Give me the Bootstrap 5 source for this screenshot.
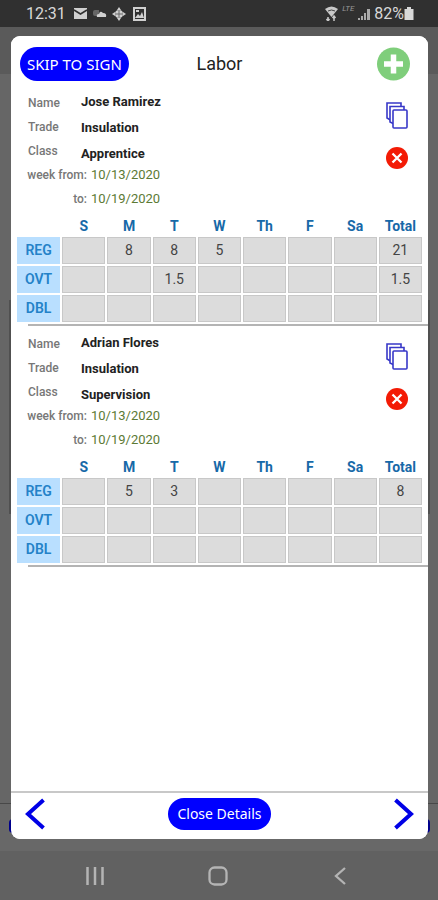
<!DOCTYPE html>
<html lang="en">
<head>
<meta charset="utf-8">
<meta name="viewport" content="width=device-width, initial-scale=1">
<title>Labor</title>
<link href="https://cdn.jsdelivr.net/npm/bootstrap@5.3.0/dist/css/bootstrap.min.css" rel="stylesheet">
<style>
body{font-family:Roboto,"Liberation Sans",sans-serif;background:#616161;color:#222}
svg{display:block}
.status-bar{height:27px;background:#303030;color:#d8d8d8;font-size:16px;line-height:27px;padding:0 24px 0 26px}
.net-label{font-size:8px;line-height:10px;color:#999}
.backdrop-area{padding:9px 10px 12px 11px;background:linear-gradient(#5a5a5a 47px,transparent 47px),linear-gradient(to top,#686868 47px,#484848 47px,#484848 48px,#666 48px)}
.labor-dialog{background:#fff;border-radius:9px;z-index:0}
.behind{z-index:-1;left:-2px;right:-2px}
.behind-pill{height:14px;bottom:6px;background:#00008c;border-radius:4px}
.behind-panel{top:264px;height:214px;background:#505050}
.dialog-face{background:#fff;border-radius:9px}
.dialog-head{display:grid;grid-template-columns:1fr auto 1fr;padding:11px 9px 4px}
.dialog-title{font-size:18px;line-height:34px;color:#222}
.pill{background:#00f;color:#fff;border:0;border-radius:17px;font-family:"Noto Sans",sans-serif}
.pill-skip{font-size:15px;line-height:34px;padding:0 7px}
.pill-close{font-size:14px;line-height:32px;padding:0 9px}
.icon-btn{background:none;border:0;padding:0}
.add-btn{margin:0 9px 0 auto}
.entry{padding-top:6px}
.entry::after{content:"";display:block;height:2px;margin-left:17px;background:#b4b4b4}
.entry-info{padding:0 20px 0 17px}
.info-labels{width:53px;font-size:12px;font-weight:500;line-height:24px;color:#777}
.info-values{padding-top:2px;gap:8px;font-size:13px;font-weight:700;line-height:18px}
.entry-actions{height:72px;padding-top:11px;gap:18px}
.date-row{padding-left:16px;gap:4px;line-height:24px}
.date-label{width:60px;font-size:12px;font-weight:500;color:#777;white-space:nowrap}
.date-value{font-size:13px;color:#5c7a35}
.hours-wrap{padding:0 4px}
.hours{width:100%;table-layout:fixed;border-collapse:separate;border-spacing:2px;text-align:center}
.hours th,.hours td{padding:0;line-height:27px;height:27px}
.hours thead th,.hours thead td{color:#1769a8;font-size:14px;font-weight:700;line-height:18px;height:22px;padding-top:4px}
.hours tbody th{background:#b9dfff;color:#2482c8;font-size:14px;font-weight:600}
.hours tbody td{background:#dcdcdc;box-shadow:inset 0 0 0 1px #c8c8c8;font-size:14px;color:#444}
.dialog-foot{border-top:2px solid #c8c8c8;padding:5px 14px 9px}
.system-nav{height:49px;padding:0 89px 0 86px}
</style>
<script src="https://cdn.jsdelivr.net/npm/bootstrap@5.3.0/dist/js/bootstrap.bundle.min.js"></script>
</head>
<body class="d-flex flex-column min-vh-100">
<svg class="d-none" aria-hidden="true">
  <symbol id="copy" viewBox="0 0 22 27"><g fill="#fff" stroke="#3838c8" stroke-width="1.6"><path d="M1 1h14v18h-9l-5-3z"/><path d="M4 4.500h14v17.500h-10l-4-2z"/><rect x="7" y="8" width="14" height="18" rx="1"/></g></symbol>
  <symbol id="remove" viewBox="0 0 22 22"><circle cx="11" cy="11" r="11" fill="#f31b05"/><path d="M6.500 6.500l9 9m0-9l-9 9" stroke="#fff" stroke-width="2.300"/></symbol>
</svg>

<header class="status-bar d-flex align-items-center justify-content-between">
  <div class="d-flex align-items-center">
    <span class="me-2">12:31</span>
    <svg width="76" height="14" viewBox="0 0 76 14" aria-hidden="true">
      <g fill="#d0d0d0"><rect x="0" y="1" width="13" height="11"/><path d="M0 3l6.500 4L13 3" fill="none" stroke="#303030" stroke-width="1.500"/>
      <path d="M19 5q0-2 2-2h4v6h-4q-2 0-2-2z" fill="#666"/><path d="M23 10q-1-3 2-3 1-4 4-1 4 0 3 4z"/>
      <circle cx="45" cy="7" r="4"/><path d="M38 7l3-2v4zM52 7l-3-2v4zM45 0l-2 3h4zM45 14l-2-3h4z"/></g>
      <path d="M41 7h8M45 3v8" stroke="#666"/>
      <rect x="60" y="1" width="11" height="12" fill="#303030" stroke="#d0d0d0" stroke-width="2"/><path d="M61 11l3-4 2 2 2-4 2 6zM62 3h3v2h-3z" fill="#d0d0d0"/>
    </svg>
  </div>
  <div class="d-flex align-items-center">
    <svg width="13" height="15" viewBox="0 0 13 15" class="me-1" aria-hidden="true"><path d="M0 3q6.500-5 13 0l-6.500 8z" fill="#c8c8c8"/><path d="M3 5q3.500-2 7 0" stroke="#444" fill="none"/><path d="M3 15v-4M1.500 13L3 15l1.500-2M9 15v-5M7.500 12L9 10l1.500 2" stroke="#c8c8c8" fill="none" stroke-width="1.500"/></svg>
    <span class="net-label fst-italic align-self-start mt-1 me-1">LTE</span>
    <svg width="12" height="12" viewBox="0 0 12 12" class="me-1" aria-hidden="true"><path d="M0 12v-2h2v2zM3 12V8h2v4zM6 12V5h2v7zM9 12V1h3v11z" fill="#aaa"/></svg>
    <span>82%</span>
    <svg width="10" height="13" viewBox="0 0 9 13" aria-hidden="true"><path d="M0 2h2.500V0h4v2H9v11H0z" fill="#d8d8d8"/></svg>
  </div>
</header>

<main class="backdrop-area flex-fill d-flex flex-column">
  <div class="labor-dialog position-relative flex-fill d-flex flex-column">
    <div class="behind behind-panel position-absolute"></div>
    <div class="behind behind-pill position-absolute"></div>
    <div class="dialog-face flex-fill d-flex flex-column">
    <div class="dialog-head">
      <div><button type="button" class="pill pill-skip text-nowrap">SKIP TO SIGN</button></div>
      <h1 class="dialog-title fw-normal m-0">Labor</h1>
      <button type="button" class="icon-btn add-btn" aria-label="Add labor entry">
        <svg width="33" height="34" viewBox="0 0 33 34"><circle cx="16.500" cy="17" r="16.500" fill="#7fce7b"/><path d="M16.500 7.500v19M7 17h19" stroke="#fff" stroke-width="5.500"/></svg>
      </button>
    </div>

    <section class="entry">
      <div class="entry-info d-flex">
        <div class="info-labels"><div>Name</div><div>Trade</div><div>Class</div></div>
        <div class="info-values d-flex flex-column flex-fill"><div>Jose Ramirez</div><div>Insulation</div><div>Apprentice</div></div>
        <div class="entry-actions d-flex flex-column align-items-end">
          <button type="button" class="icon-btn" aria-label="Copy entry"><svg width="22" height="27"><use href="#copy"/></svg></button>
          <button type="button" class="icon-btn" aria-label="Delete entry"><svg width="22" height="22"><use href="#remove"/></svg></button>
        </div>
      </div>
      <div class="date-row d-flex"><span class="date-label text-end">week from:</span><span class="date-value">10/13/2020</span></div>
      <div class="date-row d-flex"><span class="date-label text-end">to:</span><span class="date-value">10/19/2020</span></div>
      <div class="hours-wrap">
        <table class="hours">
          <thead><tr><td></td><th>S</th><th>M</th><th>T</th><th>W</th><th>Th</th><th>F</th><th>Sa</th><th>Total</th></tr></thead>
          <tbody>
            <tr><th>REG</th><td></td><td>8</td><td>8</td><td>5</td><td></td><td></td><td></td><td>21</td></tr>
            <tr><th>OVT</th><td></td><td></td><td>1.5</td><td></td><td></td><td></td><td></td><td>1.5</td></tr>
            <tr><th>DBL</th><td></td><td></td><td></td><td></td><td></td><td></td><td></td><td></td></tr>
          </tbody>
        </table>
      </div>
    </section>

    <section class="entry">
      <div class="entry-info d-flex">
        <div class="info-labels"><div>Name</div><div>Trade</div><div>Class</div></div>
        <div class="info-values d-flex flex-column flex-fill"><div>Adrian Flores</div><div>Insulation</div><div>Supervision</div></div>
        <div class="entry-actions d-flex flex-column align-items-end">
          <button type="button" class="icon-btn" aria-label="Copy entry"><svg width="22" height="27"><use href="#copy"/></svg></button>
          <button type="button" class="icon-btn" aria-label="Delete entry"><svg width="22" height="22"><use href="#remove"/></svg></button>
        </div>
      </div>
      <div class="date-row d-flex"><span class="date-label text-end">week from:</span><span class="date-value">10/13/2020</span></div>
      <div class="date-row d-flex"><span class="date-label text-end">to:</span><span class="date-value">10/19/2020</span></div>
      <div class="hours-wrap">
        <table class="hours">
          <thead><tr><td></td><th>S</th><th>M</th><th>T</th><th>W</th><th>Th</th><th>F</th><th>Sa</th><th>Total</th></tr></thead>
          <tbody>
            <tr><th>REG</th><td></td><td>5</td><td>3</td><td></td><td></td><td></td><td></td><td>8</td></tr>
            <tr><th>OVT</th><td></td><td></td><td></td><td></td><td></td><td></td><td></td><td></td></tr>
            <tr><th>DBL</th><td></td><td></td><td></td><td></td><td></td><td></td><td></td><td></td></tr>
          </tbody>
        </table>
      </div>
    </section>

    <div class="dialog-foot d-flex align-items-center justify-content-between mt-auto">
      <button type="button" class="icon-btn" aria-label="Previous"><svg width="20" height="32" viewBox="0 0 20 32"><path d="M18.500 2L3 16l15.500 14" fill="none" stroke="#0000e6" stroke-width="4"/></svg></button>
      <button type="button" class="pill pill-close text-nowrap">Close Details</button>
      <button type="button" class="icon-btn" aria-label="Next"><svg width="20" height="32" viewBox="0 0 20 32"><path d="M1.500 2L17 16 1.500 30" fill="none" stroke="#0000e6" stroke-width="4"/></svg></button>
    </div>
    </div>
  </div>
</main>

<nav class="system-nav d-flex align-items-center justify-content-between" aria-label="System">
  <button type="button" class="icon-btn" aria-label="Recent apps"><svg width="18" height="18" viewBox="0 0 18 18"><path d="M1.500 0v18M9 0v18M16.500 0v18" stroke="#b4b4b4" stroke-width="2.500"/></svg></button>
  <button type="button" class="icon-btn" aria-label="Home"><svg width="20" height="20" viewBox="0 0 20 20"><rect x="1.500" y="1.500" width="17" height="17" rx="5" fill="none" stroke="#b4b4b4" stroke-width="2.300"/></svg></button>
  <button type="button" class="icon-btn" aria-label="Back"><svg width="18" height="18" viewBox="0 0 18 18"><path d="M14 1L5 9l9 8" fill="none" stroke="#b4b4b4" stroke-width="2.300"/></svg></button>
</nav>
</body>
</html>
